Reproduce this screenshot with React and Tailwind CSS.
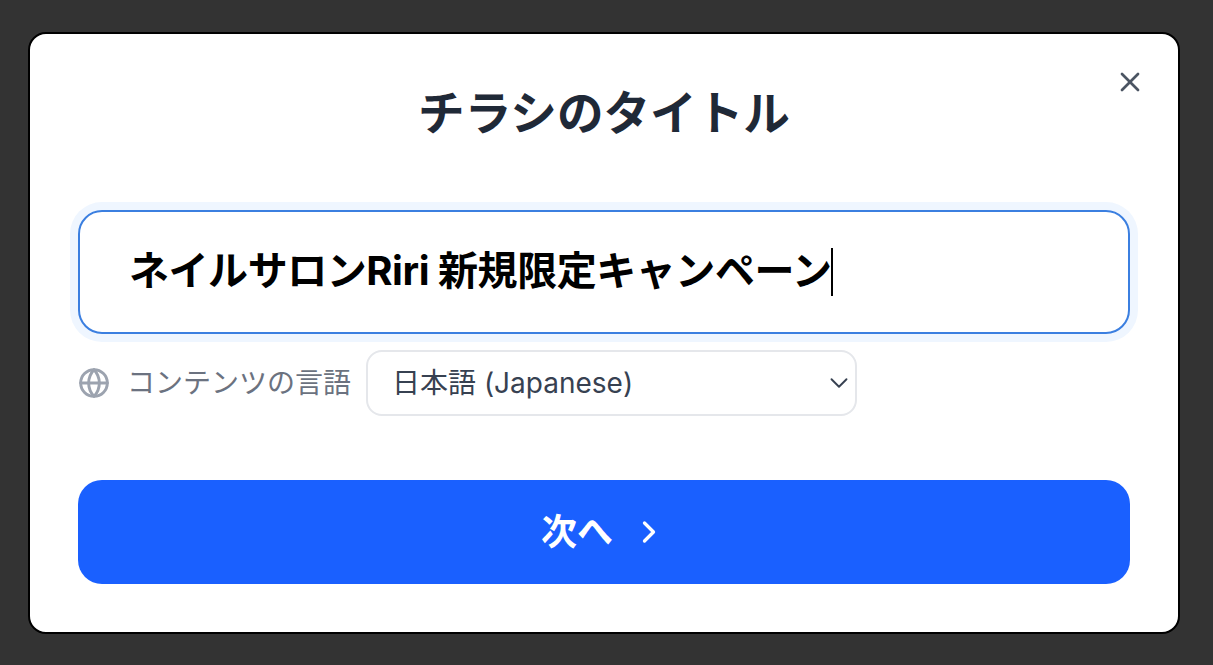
import React from "react";
import { X, Globe, ChevronDown, ChevronRight } from "lucide-react";

export default function App() {
  return (
    <div className="flex h-[665px] w-full items-start overflow-hidden bg-[#333333] pl-7 pt-8 font-['Inter','Noto_Sans_CJK_JP',sans-serif]">
      <div className="relative flex h-[602px] w-[1152px] flex-col rounded-[18px] border-2 border-black bg-white px-12 pt-[50px]">
        <button className="absolute right-[32px] top-[32px] text-[#4b5563]">
          <X size={32} strokeWidth={2} />
        </button>
        <h1 className="text-center text-[46.6px] leading-[58px] font-bold text-[#1f2937]">チラシのタイトル</h1>
        <div className="mt-[68px] flex h-[124px] items-center rounded-[24px] border-2 border-[#3b7fe0] bg-white pl-[49px] pb-[2px] shadow-[0_0_0_8px_#eff6ff]">
          <span className="text-[40px] leading-[50px] font-bold tracking-[-0.45px] whitespace-nowrap text-black">ネイルサロンRiri 新規限定キャンペーン</span>
          <span className="-ml-[1px] mt-[2px] h-[48px] w-[2px] bg-black" />
        </div>
        <div className="mt-4 flex items-center">
          <Globe size={32} strokeWidth={2.2} className="text-[#9ca3af]" />
          <span className="ml-[17px] text-[28px] leading-8 text-[#6b7280]">コンテンツの言語</span>
          <div className="ml-[15px] flex h-[66px] w-[491px] items-center justify-between rounded-[16px] border-2 border-[#e5e7eb] bg-white pl-[24px] pr-[1px]">
            <span className="text-[28px] leading-8 text-[#374151]">日本語 (Japanese)</span>
            <ChevronDown size={30} strokeWidth={1.5} className="text-[#374151]" />
          </div>
        </div>
        <button className="mt-[64px] flex h-[104px] w-full items-center justify-center gap-[18px] rounded-[24px] bg-[#1a60ff] text-white">
          <span className="text-[36px] leading-10 font-bold">次へ</span>
          <ChevronRight size={36} strokeWidth={2.2} />
        </button>
      </div>
    </div>
  );
}
